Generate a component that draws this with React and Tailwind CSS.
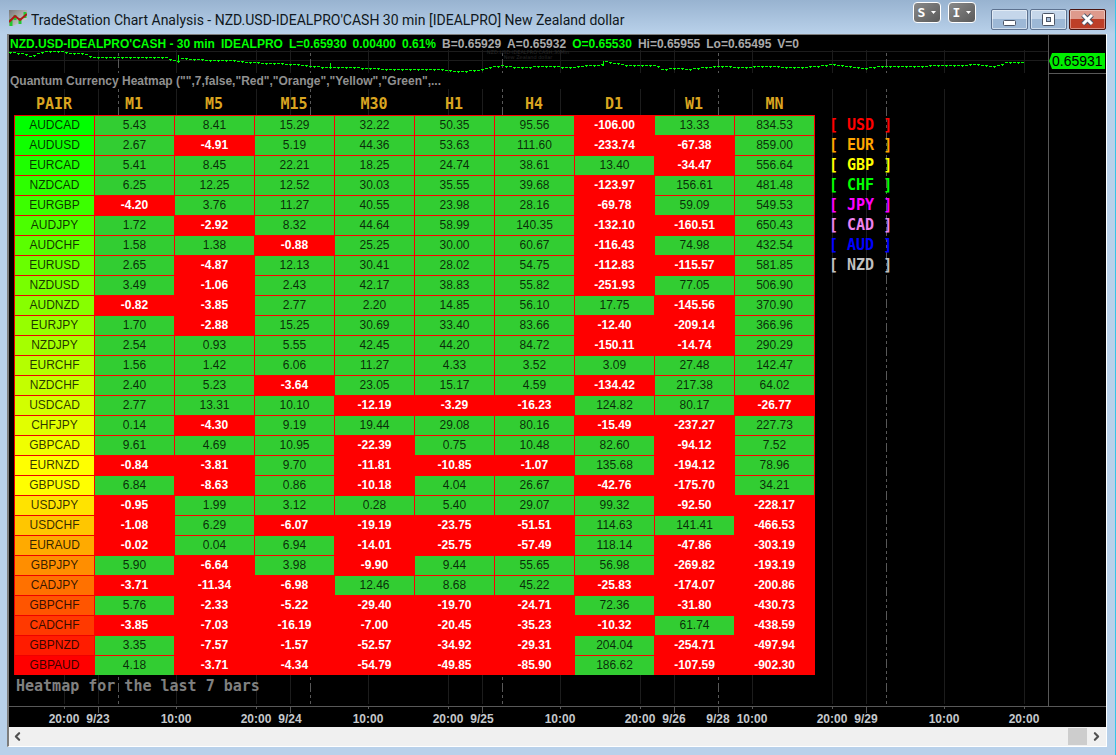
import React from 'react';
import { ChevronLeft, ChevronRight } from 'lucide-react';

const FRAMES = ['M1', 'M5', 'M15', 'M30', 'H1', 'H4', 'D1', 'W1', 'MN'];

const ROWS = [
  ['AUDCAD', '5.43', '8.41', '15.29', '32.22', '50.35', '95.56', '-106.00', '13.33', '834.53'],
  ['AUDUSD', '2.67', '-4.91', '5.19', '44.36', '53.63', '111.60', '-233.74', '-67.38', '859.00'],
  ['EURCAD', '5.41', '8.45', '22.21', '18.25', '24.74', '38.61', '13.40', '-34.47', '556.64'],
  ['NZDCAD', '6.25', '12.25', '12.52', '30.03', '35.55', '39.68', '-123.97', '156.61', '481.48'],
  ['EURGBP', '-4.20', '3.76', '11.27', '40.55', '23.98', '28.16', '-69.78', '59.09', '549.53'],
  ['AUDJPY', '1.72', '-2.92', '8.32', '44.64', '58.99', '140.35', '-132.10', '-160.51', '650.43'],
  ['AUDCHF', '1.58', '1.38', '-0.88', '25.25', '30.00', '60.67', '-116.43', '74.98', '432.54'],
  ['EURUSD', '2.65', '-4.87', '12.13', '30.41', '28.02', '54.75', '-112.83', '-115.57', '581.85'],
  ['NZDUSD', '3.49', '-1.06', '2.43', '42.17', '38.83', '55.82', '-251.93', '77.05', '506.90'],
  ['AUDNZD', '-0.82', '-3.85', '2.77', '2.20', '14.85', '56.10', '17.75', '-145.56', '370.90'],
  ['EURJPY', '1.70', '-2.88', '15.25', '30.69', '33.40', '83.66', '-12.40', '-209.14', '366.96'],
  ['NZDJPY', '2.54', '0.93', '5.55', '42.45', '44.20', '84.72', '-150.11', '-14.74', '290.29'],
  ['EURCHF', '1.56', '1.42', '6.06', '11.27', '4.33', '3.52', '3.09', '27.48', '142.47'],
  ['NZDCHF', '2.40', '5.23', '-3.64', '23.05', '15.17', '4.59', '-134.42', '217.38', '64.02'],
  ['USDCAD', '2.77', '13.31', '10.10', '-12.19', '-3.29', '-16.23', '124.82', '80.17', '-26.77'],
  ['CHFJPY', '0.14', '-4.30', '9.19', '19.44', '29.08', '80.16', '-15.49', '-237.27', '227.73'],
  ['GBPCAD', '9.61', '4.69', '10.95', '-22.39', '0.75', '10.48', '82.60', '-94.12', '7.52'],
  ['EURNZD', '-0.84', '-3.81', '9.70', '-11.81', '-10.85', '-1.07', '135.68', '-194.12', '78.96'],
  ['GBPUSD', '6.84', '-8.63', '0.86', '-10.18', '4.04', '26.67', '-42.76', '-175.70', '34.21'],
  ['USDJPY', '-0.95', '1.99', '3.12', '0.28', '5.40', '29.07', '99.32', '-92.50', '-228.17'],
  ['USDCHF', '-1.08', '6.29', '-6.07', '-19.19', '-23.75', '-51.51', '114.63', '141.41', '-466.53'],
  ['EURAUD', '-0.02', '0.04', '6.94', '-14.01', '-25.75', '-57.49', '118.14', '-47.86', '-303.19'],
  ['GBPJPY', '5.90', '-6.64', '3.98', '-9.90', '9.44', '55.65', '56.98', '-269.82', '-193.19'],
  ['CADJPY', '-3.71', '-11.34', '-6.98', '12.46', '8.68', '45.22', '-25.83', '-174.07', '-200.86'],
  ['GBPCHF', '5.76', '-2.33', '-5.22', '-29.40', '-19.70', '-24.71', '72.36', '-31.80', '-430.73'],
  ['CADCHF', '-3.85', '-7.03', '-16.19', '-7.00', '-20.45', '-35.23', '-10.32', '61.74', '-438.59'],
  ['GBPNZD', '3.35', '-7.57', '-1.57', '-52.57', '-34.92', '-29.31', '204.04', '-254.71', '-497.94'],
  ['GBPAUD', '4.18', '-3.71', '-4.34', '-54.79', '-49.85', '-85.90', '186.62', '-107.59', '-902.30'],
];

const LEGEND = [
  ['USD', 'text-[#ff0000]'],
  ['EUR', 'text-[#ffa500]'],
  ['GBP', 'text-[#ffff00]'],
  ['CHF', 'text-[#00ff00]'],
  ['JPY', 'text-[#ff00ff]'],
  ['CAD', 'text-[#ee82ee]'],
  ['AUD', 'text-[#0000ff]'],
  ['NZD', 'text-[#c0c0c0]'],
];

const STATUS = [
  ["NZD.USD-IDEALPRO'CASH - 30 min", true],
  ['IDEALPRO', true],
  ['L=0.65930', true],
  ['0.00400', true],
  ['0.61%', true],
  ['B=0.65929', false],
  ['A=0.65932', false],
  ['O=0.65530', true],
  ['Hi=0.65955', false],
  ['Lo=0.65495', false],
  ['V=0', false],
];

// x is measured from the left edge of the plot
const TICKS = [
  [55, '20:00'], [89, '9/23'], [167, '10:00'], [247, '20:00'], [281, '9/24'],
  [359, '10:00'], [439, '20:00'], [473, '9/25'], [551, '10:00'], [631, '20:00'],
  [665, '9/26'], [709, '9/28'], [743, '10:00'], [823, '20:00'], [857, '9/29'],
  [935, '10:00'], [1015, '20:00'],
];
const SESSIONS = [109, 301, 493, 709, 877];

const PRICE = [
  [0, 17], [13, 18], [21, 21], [29, 17], [41, 16], [51, 16], [63, 18], [75, 18], [83, 22],
  [156, 22], [164, 25], [168, 26], [172, 23], [203, 25], [221, 25], [236, 27], [261, 28],
  [286, 29], [301, 31], [316, 32], [341, 32], [381, 34], [431, 34], [446, 36], [466, 35],
  [476, 33], [491, 30], [506, 32], [536, 31], [561, 32], [576, 30], [591, 30], [594, 26],
  [606, 28], [616, 30], [646, 30], [652, 34], [666, 33], [679, 34], [691, 32], [711, 31],
  [735, 32], [746, 31], [791, 32], [806, 31], [823, 29], [836, 31], [853, 33], [871, 31],
  [911, 31], [926, 30], [951, 30], [966, 29], [981, 31], [991, 30], [996, 27], [1015, 27],
];

function priceAt(x) {
  const i = Math.max(1, PRICE.findIndex((p) => p[0] >= x));
  const [x0, y0] = PRICE[i - 1];
  const [x1, y1] = PRICE[i];
  return Math.round(y0 + ((y1 - y0) * (x - x0)) / (x1 - x0));
}

function pricePath() {
  let d = '';
  for (let x = 0; x <= 1012; x += 4) {
    const y = priceAt(x);
    d += `M${x} ${y}.5h3`;
    if (x % 8 === 0) d += `M${x + 1}.5 ${y}v2`;
  }
  return d + 'M169.5 20v7M321.5 28v5M594.5 26v5';
}

function pairColor(i) {
  if (i < 18) return `rgb(${Math.min(255, i * 15)}, 255, 0)`;
  return `rgb(255, ${Math.round(((27 - i) * 255) / 9)}, 0)`;
}

function ChartGrid() {
  return (
    <svg className="absolute inset-0 w-full h-full" aria-hidden="true">
      <g stroke="#1c1c1c" shapeRendering="crispEdges">
        <line x1="0" x2="1039" y1="16.5" y2="16.5" />
        <line x1="0" x2="1039" y1="25.5" y2="25.5" />
        {TICKS.filter(([x]) => !SESSIONS.includes(x)).map(([x]) => (
          <line key={x} x1={x + 0.5} x2={x + 0.5} y1="15" y2="669" />
        ))}
      </g>
      <g stroke="#585858" strokeDasharray="9 3 3 3 3 3" shapeRendering="crispEdges">
        {SESSIONS.map((x) => (
          <line key={x} x1={x + 0.5} x2={x + 0.5} y1="0" y2="669" />
        ))}
      </g>
      <g fill="#2b2b2b" fontFamily="DejaVu Sans, sans-serif" fontSize="5" textAnchor="middle">
        <text x="519" y="19">NZD.USD-IDEALPRO'CASH,30Min</text>
        <text x="519" y="24">New Zealand dollar</text>
      </g>
      <path d={pricePath()} stroke="#00ff00" fill="none" shapeRendering="crispEdges" />
    </svg>
  );
}

function TimeAxis() {
  return (
    <div className="h-[21px] bg-black border-t border-[#585858]">
      <svg className="block w-full h-full" role="img" aria-label="Time axis">
        {TICKS.map(([x, label]) => (
          <g key={x}>
            <line
              x1={x + 0.5}
              x2={x + 0.5}
              y1="0"
              y2={label.includes('/') ? 6 : 2}
              stroke="#585858"
              shapeRendering="crispEdges"
            />
            <text
              x={x}
              y="16"
              textAnchor="middle"
              fill="#c4c8cc"
              className="font-['Liberation_Sans',Arial,sans-serif] text-[12px] font-bold"
            >
              {label}
            </text>
          </g>
        ))}
      </svg>
    </div>
  );
}

function Heatmap() {
  return (
    <table className="w-[801px] shrink-0 table-fixed border-separate border-spacing-0 text-center text-[12px]">
      <colgroup>
        <col span={9} className="w-20" />
        <col className="w-[81px]" />
      </colgroup>
      <thead>
        <tr className="h-[26px] font-['DejaVu_Sans_Mono',monospace] text-[15px] leading-5 text-[#daa520]">
          {['PAIR', ...FRAMES].map((name) => (
            <th key={name} scope="col" className="p-0 pt-1 font-bold">{name}</th>
          ))}
        </tr>
      </thead>
      <tbody className="leading-[19px]">
        {ROWS.map(([pair, ...values], i) => (
          <tr key={pair} className="h-5">
            <th
              scope="row"
              className="p-0 border-t border-l border-[#f00000] font-normal text-black/80"
              style={{ backgroundColor: pairColor(i) }}
            >
              {pair}
            </th>
            {values.map((value, j) => (
              <td
                key={FRAMES[j]}
                className={`p-0 border-t border-l border-[#ff0000] last:border-r ${
                  value.startsWith('-') ? 'bg-[#ff0000] text-white font-bold' : 'bg-[#32cd32] text-black/80'
                }`}
              >
                {value}
              </td>
            ))}
          </tr>
        ))}
      </tbody>
    </table>
  );
}

function TitleBar() {
  return (
    <header className="h-[34px] flex items-start pl-[9px] pr-[9px]">
      <svg className="mt-[10px] w-[18px] h-4 shrink-0" viewBox="0 0 18 16" aria-hidden="true">
        <defs>
          <linearGradient id="logo" x1="0" y1="0" x2="1" y2="1">
            <stop offset="0" stopColor="#777" />
            <stop offset="1" stopColor="#e4e4e4" />
          </linearGradient>
        </defs>
        <path d="M0 0h18v9L4 16H0z" fill="url(#logo)" />
        <path d="M2 9v7M6 5v5M11 8v6M16 2v6" stroke="#22c832" strokeWidth="3" />
        <path d="M0 12l6-6 5 4 7-6" stroke="#b01818" strokeWidth="2" fill="none" />
      </svg>
      <h1 className="ml-1 mt-[10px] flex-1 truncate font-[Roboto,'Segoe_UI',sans-serif] text-[14px] leading-5 text-[#101820]">
        TradeStation Chart Analysis - NZD.USD-IDEALPRO'CASH 30 min [IDEALPRO] New Zealand dollar
      </h1>
      <div className="mt-0.5 flex gap-[7px]">
        {['S', 'I'].map((name) => (
          <button
            key={name}
            type="button"
            aria-label={`${name} menu`}
            className="w-7 h-[21px] flex items-center justify-center gap-1.5 rounded-[4px] border border-white bg-linear-to-br from-[#8a8a8a] to-[#5a5a5a] font-['DejaVu_Sans_Mono',monospace] text-[13px] leading-none font-bold text-white"
          >
            {name}
            <svg className="w-[5px] h-[3px]" viewBox="0 0 5 3" aria-hidden="true">
              <path d="M0 0h5L2.5 3z" fill="#fff" />
            </svg>
          </button>
        ))}
      </div>
      <div className="ml-[15px] mt-[9px] flex gap-[2px]">
        <button
          type="button"
          aria-label="Minimize"
          className="w-[37px] h-[21px] flex items-center justify-center rounded-[2px] border border-[#5d7290] bg-linear-to-b from-[#c5d6ea] from-50% to-[#9db8d6] to-50% ring-1 ring-inset ring-white/50"
        >
          <svg className="w-[13px] h-[13px]" viewBox="0 0 13 13" aria-hidden="true">
            <rect x=".5" y="7.5" width="12" height="5" rx="1" fill="#fff" stroke="#4c5566" />
          </svg>
        </button>
        <button
          type="button"
          aria-label="Restore"
          className="w-[37px] h-[21px] flex items-center justify-center rounded-[2px] border border-[#5d7290] bg-linear-to-b from-[#c5d6ea] from-50% to-[#9db8d6] to-50% ring-1 ring-inset ring-white/50"
        >
          <svg className="w-[13px] h-[13px]" viewBox="0 0 13 13" aria-hidden="true">
            <rect x=".5" y=".5" width="12" height="12" rx="1" fill="#fff" stroke="#4c5566" />
            <rect x="4.5" y="4.5" width="4" height="4" fill="#a9bfda" stroke="#4c5566" />
          </svg>
        </button>
        <button
          type="button"
          aria-label="Close"
          className="w-[37px] h-[21px] flex items-center justify-center rounded-[2px] border border-[#4a1410] bg-linear-to-b from-[#de9a8c] from-45% to-[#bd3f28] to-50% ring-1 ring-inset ring-white/40"
        >
          <svg className="w-[15px] h-[13px]" viewBox="0 0 15 13" aria-hidden="true">
            <path d="M3 2l9 9M12 2l-9 9" stroke="#4c5566" strokeWidth="5" />
            <path d="M3 2l9 9M12 2l-9 9" stroke="#fff" strokeWidth="3" />
          </svg>
        </button>
      </div>
    </header>
  );
}

export default function App() {
  return (
    <div className="min-h-screen bg-[#b9d1ea] border-r border-[#35c5e8] bg-linear-to-b from-[#98b3d0] to-[#b9d1ea] to-[34px] font-['Liberation_Sans',Arial,sans-serif]">
      <TitleBar />
      <main className="ml-[7px] mr-[9px] border-l-2 border-t border-[#7d7d7d] border-b border-b-white shadow-[1px_0_0_#fff]">
        <div className="flex bg-black">
          <section className="relative flex-1 min-w-0 overflow-hidden">
            <ChartGrid />
            <div className="relative">
              <div className="h-[15px] flex gap-1.5 pl-px bg-black whitespace-nowrap text-[12px] leading-[18px] font-bold">
                {STATUS.map(([text, up]) => (
                  <span key={text} className={up ? 'text-[#00ff00]' : 'text-[#a9a9a9]'}>{text}</span>
                ))}
              </div>
              <div className="h-[23px]" />
              <p className="h-4 pl-px bg-black text-[12px] leading-[17px] font-bold text-[#909090]">
                Quantum Currency Heatmap ("",7,false,"Red","Orange","Yellow","Green",...
              </p>
              <div className="flex pl-[5px]">
                <Heatmap />
                <ul className="pt-[26px] pl-[14px] font-['DejaVu_Sans_Mono',monospace] text-[15px] leading-5 font-bold">
                  {LEGEND.map(([name, color]) => (
                    <li key={name} className={`whitespace-pre ${color}`}>{`[ ${name} ]`}</li>
                  ))}
                </ul>
              </div>
              <p className="h-[31px] pl-[7px] border-t border-[#ff0000]/0 font-['DejaVu_Sans_Mono',monospace] text-[15px] leading-5 font-bold text-[#808080]">
                Heatmap for the last 7 bars
              </p>
            </div>
          </section>
          <aside className="w-[58px] shrink-0 border-l border-[#585858]">
            <div className="h-[39px] pt-[18px] pr-px border-b border-[#585858]">
              <div className="flex h-4 items-center">
                <svg className="w-[3px] h-4 shrink-0" viewBox="0 0 3 16" aria-hidden="true">
                  <path d="M3 0v16L0 8z" fill="#00ee00" />
                </svg>
                <span className="flex-1 bg-[#00ee00] text-[14px] leading-4 text-black">0.65931</span>
              </div>
            </div>
          </aside>
        </div>
        <TimeAxis />
        <div className="h-[19px] flex items-center justify-between bg-[#f0f0f0]">
          <button type="button" aria-label="Scroll left" className="w-[17px] flex justify-center text-[#505050]">
            <ChevronLeft size={13} strokeWidth={4} />
          </button>
          <div className="flex h-full items-center">
            <div className="w-[19px] h-[17px] bg-[#cdcdcd]" />
            <button type="button" aria-label="Scroll right" className="w-[19px] flex justify-center text-[#505050]">
              <ChevronRight size={13} strokeWidth={4} />
            </button>
          </div>
        </div>
      </main>
    </div>
  );
}
